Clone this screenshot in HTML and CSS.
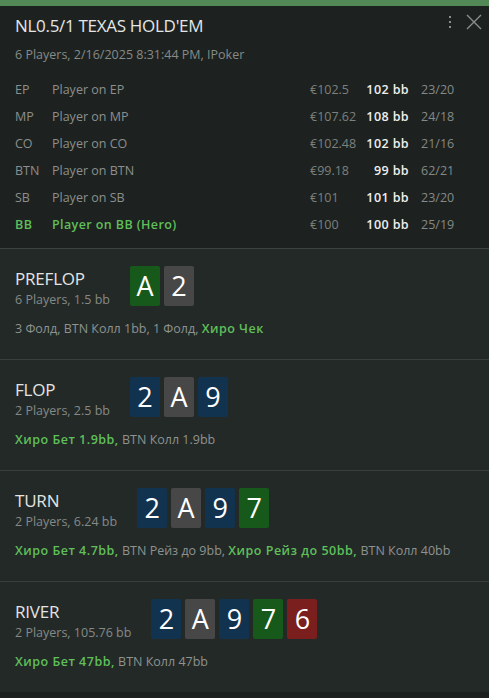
FILE: index.html
```html
<!DOCTYPE html>
<html>
<head>
<meta charset="utf-8">
<link rel="stylesheet" href="styles.css">
</head>
<body>
<div class="panel">
  <div class="topbar"></div>
  <header class="header">
    <div class="title-row">
      <div class="title">NL0.5/1 TEXAS HOLD'EM</div>
      <div class="tools">
        <svg class="kebab" width="4" height="16" viewBox="0 0 4 16"><rect x="1" y="2" width="2" height="2" fill="#8a8f8c"/><rect x="1" y="7" width="2" height="2" fill="#8a8f8c"/><rect x="1" y="12" width="2" height="2" fill="#8a8f8c"/></svg>
        <svg class="close" width="16" height="16" viewBox="0 0 16 16"><path d="M1 1 L15 15 M15 1 L1 15" stroke="#8a8f8c" stroke-width="1.4" fill="none"/></svg>
      </div>
    </div>
    <div class="subtitle">6 Players, 2/16/2025 8:31:44 PM, IPoker</div>
    <div class="players">
      <div class="pos">EP</div><div class="name">Player on EP</div><div class="money">€102.5</div><div class="bb">102 bb</div><div class="stats">23/20</div>
      <div class="pos">MP</div><div class="name">Player on MP</div><div class="money">€107.62</div><div class="bb">108 bb</div><div class="stats">24/18</div>
      <div class="pos">CO</div><div class="name">Player on CO</div><div class="money">€102.48</div><div class="bb">102 bb</div><div class="stats">21/16</div>
      <div class="pos">BTN</div><div class="name">Player on BTN</div><div class="money">€99.18</div><div class="bb">99 bb</div><div class="stats">62/21</div>
      <div class="pos">SB</div><div class="name">Player on SB</div><div class="money">€101</div><div class="bb">101 bb</div><div class="stats">23/20</div>
      <div class="pos hero">BB</div><div class="name hero">Player on BB (Hero)</div><div class="money">€100</div><div class="bb">100 bb</div><div class="stats">25/19</div>
    </div>
  </header>

  <section class="street">
    <div class="street-top">
      <div class="street-info">
        <div class="street-name">PREFLOP</div>
        <div class="street-sub">6 Players, 1.5 bb</div>
      </div>
      <div class="cards"><span class="card green">A</span><span class="card grey">2</span></div>
    </div>
    <div class="actions">3 Фолд, BTN Колл 1bb, 1 Фолд, <b class="h">Хиро Чек</b></div>
  </section>

  <section class="street">
    <div class="street-top">
      <div class="street-info">
        <div class="street-name">FLOP</div>
        <div class="street-sub">2 Players, 2.5 bb</div>
      </div>
      <div class="cards"><span class="card blue">2</span><span class="card grey">A</span><span class="card blue">9</span></div>
    </div>
    <div class="actions"><b class="h">Хиро Бет 1.9bb,</b> BTN Колл 1.9bb</div>
  </section>

  <section class="street">
    <div class="street-top">
      <div class="street-info">
        <div class="street-name">TURN</div>
        <div class="street-sub">2 Players, 6.24 bb</div>
      </div>
      <div class="cards"><span class="card blue">2</span><span class="card grey">A</span><span class="card blue">9</span><span class="card green">7</span></div>
    </div>
    <div class="actions"><b class="h">Хиро Бет 4.7bb,</b> BTN Рейз до 9bb, <b class="h">Хиро Рейз до 50bb,</b> BTN Колл 40bb</div>
  </section>

  <section class="street">
    <div class="street-top">
      <div class="street-info">
        <div class="street-name">RIVER</div>
        <div class="street-sub">2 Players, 105.76 bb</div>
      </div>
      <div class="cards"><span class="card blue">2</span><span class="card grey">A</span><span class="card blue">9</span><span class="card green">7</span><span class="card red">6</span></div>
    </div>
    <div class="actions"><b class="h">Хиро Бет 47bb,</b> BTN Колл 47bb</div>
  </section>
</div>
</body>
</html>
```

FILE: styles.css
```css
html, body {
  margin: 0;
  padding: 0;
  background: #1c211f;
}
body {
  font-family: "Open Sans", "Noto Sans", sans-serif;
  color: #8c8f8d;
  width: 489px;
  height: 698px;
  overflow: hidden;
}
.panel {
  display: flex;
  flex-direction: column;
}
.topbar {
  height: 6px;
  background: #528956;
}
.header {
  background: #1d2220;
  padding: 8px 15px 10px 15px;
  border-bottom: 1px solid #3d4240;
}
.title-row {
  display: flex;
  justify-content: space-between;
  align-items: flex-start;
}
.title {
  font-size: 17px;
  line-height: 24px;
  color: #e4e6e5;
  letter-spacing: -0.3px;
}
.tools {
  display: flex;
  align-items: center;
  gap: 14px;
  margin-right: -8px;
}
.subtitle {
  font-size: 12.5px;
  line-height: 18px;
  margin-top: 8px;
  color: #868a88;
}
.players {
  display: grid;
  grid-template-columns: 37px 258px 52px 47px 1fr;
  grid-auto-rows: 27px;
  align-items: center;
  margin-top: 12px;
  font-size: 12.5px;
}
.pos, .name { color: #8c8f8d; }
.money { color: #7c807e; }
.bb {
  color: #eeeeee;
  font-weight: 600;
  text-align: right;
  letter-spacing: 0.4px;
}
.stats {
  color: #858987;
  padding-left: 12px;
}
.hero {
  color: #5fbf5a;
  font-weight: 600;
  letter-spacing: 0.4px;
}
.street {
  background: #232927;
  padding: 17px 15px 21px 15px;
  border-bottom: 1px solid #3a3f3d;
}
.street:last-child {
  border-bottom: none;
  padding-bottom: 21px;
}
.street-top {
  display: flex;
  align-items: flex-start;
  gap: 20px;
}
.street-info {
  margin-top: 1px;
}
.street-name {
  font-size: 17px;
  line-height: 24px;
  color: #e2e4e3;
  letter-spacing: -0.2px;
}
.street-sub {
  font-size: 12.5px;
  line-height: 18px;
  color: #858987;
}
.cards {
  display: flex;
  gap: 4px;
}
.card {
  width: 30px;
  height: 40px;
  border-radius: 2px;
  color: #ffffff;
  font-size: 27px;
  line-height: 40px;
  text-align: center;
}
.green { background: #17591a; }
.grey { background: #474747; }
.blue { background: #12334f; }
.red { background: #7a1e1e; }
.actions {
  margin-top: 11px;
  font-size: 12.5px;
  line-height: 18px;
  color: #8e9290;
}
.h {
  color: #5fbf5a;
  font-weight: 600;
  letter-spacing: 0.5px;
}
```
